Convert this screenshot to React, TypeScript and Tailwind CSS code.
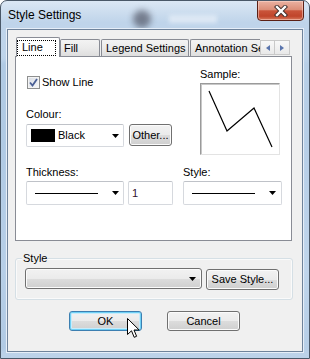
import React from "react";

const Tri = ({ color = "#000" }: { color?: string }) => (
  <svg width="7" height="4" viewBox="0 0 7 4" className="block">
    <path d="M0 0H7L3.5 4Z" fill={color} />
  </svg>
);

const btn =
  "border border-[#707070] rounded-[3px] bg-[linear-gradient(180deg,#f2f2f2_0%,#ebebeb_50%,#dddddd_50%,#cfcfcf_100%)] shadow-[inset_0_0_0_1px_#fbfbfb] flex items-center justify-center";

const combo =
  "border border-[#d6d9de] border-t-[#bfc2c8] rounded-[2px] bg-white flex items-center";

export default function App() {
  return (
    <div className="relative w-[310px] h-[359px] overflow-hidden rounded-t-[7px] border border-[#4a5868] bg-[linear-gradient(180deg,#dbe7f4_0%,#bfd4ea_6%,#bdd3ea_40%,#c9dcf0_75%,#bcd2e9_100%)] font-['Liberation_Sans',Arial,sans-serif] text-[11px] leading-[13px] text-black">
      {/* blurred glass background */}
      <div className="absolute left-[132px] top-[9px] w-[18px] h-[18px] rounded-full bg-[#3f4150] opacity-60 blur-[3px]" />
      <div className="absolute left-[168px] top-[14px] w-[48px] h-[8px] bg-[#e4edf7] opacity-80 blur-[2px]" />
      <div className="absolute left-[0px] top-[60px] w-[5px] h-[290px] bg-[#9fbddc] opacity-60 blur-[2px]" />
      <div className="absolute right-[0px] top-[60px] w-[4px] h-[290px] bg-[#a8c3e0] opacity-50 blur-[2px]" />

      {/* title bar */}
      <div className="relative h-[28px] flex items-center pl-[7px] pt-[1px] text-[12px] leading-[15px] text-black">
        Style Settings
      </div>

      {/* close button */}
      <div className="absolute left-[256px] top-[-1px] w-[47px] h-[21px] rounded-b-[4px] border border-[#5b2015] bg-[linear-gradient(180deg,#eab2a2_0%,#dc8e78_45%,#c9543a_52%,#c0452b_80%,#d77a5e_100%)] shadow-[inset_0_0_0_1px_rgba(255,220,210,0.5)] flex items-center justify-center">
        <svg width="14" height="12" viewBox="0 0 14 12">
          <path d="M3 2L11 10M11 2L3 10" stroke="#3a2a28" strokeWidth="4.2" strokeLinecap="square" />
          <path d="M3 2L11 10M11 2L3 10" stroke="#ffffff" strokeWidth="2.4" strokeLinecap="square" />
        </svg>
      </div>

      {/* client area */}
      <div className="relative mx-[6px] h-[323px] border border-[#6f839b] bg-[#f0f0f0] shadow-[0_0_0_1px_#e6eef8]">
        <div className="pl-[7px] pt-[7px]">
          {/* tabs */}
          <div className="relative z-10 flex items-end h-[19px]">
            <div className="ml-[1px] w-[44px] h-[20px] -mb-[1px] bg-white border border-b-0 border-[#898c95] rounded-t-[2px] pt-[2px]">
              <span className="block w-[39px] h-[16px] border border-dotted border-black pl-[4px] leading-[13px]">
                Line
              </span>
            </div>
            <div className="w-[40px] h-[17px] border border-b-0 border-[#898c95] rounded-t-[2px] bg-[linear-gradient(180deg,#f3f3f3_0%,#ebebeb_50%,#dedede_100%)] pl-[3px] pt-[2px]">
              Fill
            </div>
            <div className="ml-[1px] w-[88px] h-[17px] border border-b-0 border-[#898c95] rounded-t-[2px] bg-[linear-gradient(180deg,#f3f3f3_0%,#ebebeb_50%,#dedede_100%)] pl-[4px] pt-[2px] whitespace-nowrap">
              Legend Settings
            </div>
            <div className="ml-[1px] w-[70px] h-[17px] border border-b-0 border-r-0 border-[#898c95] rounded-tl-[2px] bg-[linear-gradient(180deg,#f3f3f3_0%,#ebebeb_50%,#dedede_100%)] pl-[4px] pt-[2px] whitespace-nowrap overflow-hidden">
              Annotation Settings
            </div>
            <div className="mb-[1px] flex h-[15px] bg-[#f4f4f4]">
              <div className="w-[15px] h-[15px] border border-[#c9c9c9] bg-[linear-gradient(180deg,#f8f8f8,#e9e9e9)] flex items-center justify-center">
                <svg width="4" height="6" viewBox="0 0 4 6"><path d="M4 0V6L0 3Z" fill="#5a75ad" /></svg>
              </div>
              <div className="w-[15px] h-[15px] border border-l-0 border-[#c9c9c9] bg-[linear-gradient(180deg,#f8f8f8,#e9e9e9)] flex items-center justify-center">
                <svg width="4" height="6" viewBox="0 0 4 6"><path d="M0 0V6L4 3Z" fill="#5a75ad" /></svg>
              </div>
            </div>
          </div>

          {/* tab page */}
          <div className="w-[277px] h-[185px] border border-[#898c95] bg-white pl-[10px]">
            <div className="flex">
              <div className="w-[174px]">
                <div className="mt-[19px] flex items-center h-[13px]">
                  <div className="ml-[1px] w-[13px] h-[13px] border border-[#8e8f8f] bg-[linear-gradient(135deg,#d9dde4,#f7f8fa)] shadow-[inset_0_0_0_1px_#f4f4f4] flex items-center justify-center">
                    <svg width="9" height="9" viewBox="0 0 9 9">
                      <path d="M1 4.5L3.5 7.5L8 1" stroke="#4a5f95" strokeWidth="1.8" fill="none" />
                    </svg>
                  </div>
                  <span className="ml-[2px]">Show Line</span>
                </div>
                <div className="mt-[19px] h-[13px]">Colour:</div>
                <div className="mt-[3px] flex">
                  <div className={`${combo} w-[98px] h-[23px] pl-[4px] pr-[4px]`}>
                    <div className="w-[24px] h-[13px] bg-black" />
                    <span className="ml-[3px] flex-1">Black</span>
                    <Tri />
                  </div>
                  <div className={`${btn} ml-[5px] w-[43px] h-[22px]`}>Other...</div>
                </div>
              </div>
              <div>
                <div className="mt-[11px] h-[13px]">Sample:</div>
                <div className="mt-[2px] w-[80px] h-[72px] border border-[#9a9a9a] border-r-[#e3e3e3] border-b-[#e3e3e3] shadow-[inset_1px_1px_0_#c8c8c8] bg-white">
                  <svg width="78" height="70" viewBox="1 1 78 70" className="block">
                    <polyline points="9,8 27,48 54,25 72,64" fill="none" stroke="#000" strokeWidth="1.2" />
                  </svg>
                </div>
              </div>
            </div>
            <div className="mt-[11px] flex h-[13px]">
              <div className="w-[157px]">Thickness:</div>
              <div>Style:</div>
            </div>
            <div className="mt-[2px] flex">
              <div className={`${combo} w-[98px] h-[24px] pl-[8px] pr-[4px]`}>
                <div className="w-[63px] h-[1px] bg-black" />
                <div className="flex-1" />
                <Tri />
              </div>
              <div className={`${combo} ml-[4px] w-[45px] h-[24px] pl-[3px] text-[#30102a]`}>1</div>
              <div className={`${combo} ml-[10px] w-[99px] h-[24px] pl-[8px] pr-[5px]`}>
                <div className="w-[63px] h-[1px] bg-black" />
                <div className="flex-1" />
                <Tri />
              </div>
            </div>
          </div>

          {/* style group */}
          <div className="relative mt-[17px] w-[278px] h-[42px] border border-[#d5dfe5] rounded-[3px] shadow-[inset_0_0_0_1px_#fafafa]">
            <span className="absolute left-[6px] top-[-7px] px-[1px] bg-[#f0f0f0]">Style</span>
            <div className="pl-[9px] pt-[9px] flex items-start">
              <div className={`${btn} w-[177px] h-[21px] !justify-end pr-[5px]`}>
                <Tri />
              </div>
              <div className={`${btn} ml-[4px] mt-[1px] w-[73px] h-[21px]`}>Save Style...</div>
            </div>
          </div>

          {/* buttons */}
          <div className="mt-[11px] flex">
            <div className="ml-[54px] w-[73px] h-[20px] rounded-[3px] border border-[#3c7fb1] bg-[linear-gradient(180deg,#f2f2f2_0%,#ebebeb_50%,#dddddd_50%,#cfcfcf_100%)] shadow-[inset_0_0_0_1px_#6fd0f5,inset_0_0_0_2px_#c8ecfb] flex items-center justify-center">
              OK
            </div>
            <div className={`${btn} ml-[25px] w-[73px] h-[20px]`}>Cancel</div>
          </div>
        </div>
      </div>

      {/* mouse cursor */}
      <svg className="absolute left-[126px] top-[317px]" width="14" height="21" viewBox="0 0 14 21">
        <path d="M0.5 0.5V16.5L4.5 12.8L7.2 19.3L9.6 18.3L7 12H12.2Z" fill="#fff" stroke="#000" strokeWidth="1" strokeLinejoin="miter" />
      </svg>
    </div>
  );
}
